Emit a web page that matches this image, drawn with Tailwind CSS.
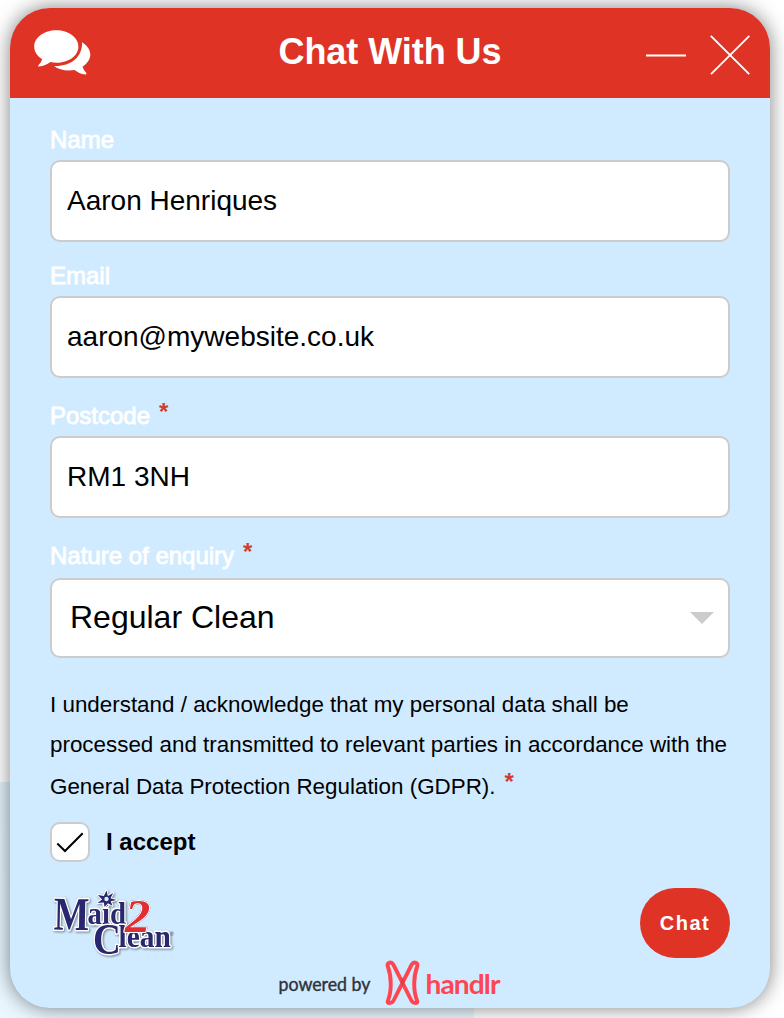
<!DOCTYPE html>
<html lang="en">
<head>
<meta charset="utf-8">
<title>Chat With Us</title>
<script src="https://cdn.jsdelivr.net/npm/@tailwindcss/browser@4"></script>
</head>
<body class="bg-white font-['Liberation_Sans',Arial,sans-serif] text-black">
<div class="relative isolate h-[1018px] w-[784px] overflow-hidden px-[10px] pt-2">
  <div class="absolute left-0 top-[782px] -z-10 h-[236px] w-[474px] bg-linear-to-b from-[#e2f2fa] to-[#eaf7ff]"></div>
  <main class="flex h-[1000px] w-[760px] flex-col overflow-hidden rounded-[40px] bg-[#d0ebff] shadow-[0_0_20px_rgba(0,0,0,0.5)]">
    <header class="flex h-[90px] shrink-0 items-start justify-between bg-[#df3326] text-white">
      <svg class="ml-6 mt-[20px] h-[50px] w-[60px]" viewBox="34 28 60 50" fill="currentColor" aria-hidden="true">
        <path d="M56.400 30.300c12.200 0 22 7.300 22 16.400s-9.800 16-22 16q-3.200 0-6-.6c-3.500 2.400-7 4-11.500 4.500-.9.100-1.100-.8-.4-1.400q3-2.700 3.700-6.100c-4.900-3-8-7.400-8-12.400 0-9.100 9.900-16.400 22.200-16.400z"/>
        <path d="M82 42.300c5 2.900 8.300 7.500 8.300 12.300 0 5-3.200 9.200-7.800 12.100q1.100 3.600 3.500 5.800c.8.900.4 2.300-.8 2.100-4.300-.7-7.700-2.300-10.600-4.600-8.100 1.300-16.100-.3-20.400-4 15.800.6 28.500-8.200 27.800-23.700z"/>
      </svg>
      <h1 class="ml-[40px] mt-6 w-[300px] text-center text-[36px] leading-[40px] font-bold tracking-[-0.05px]">Chat With Us</h1>
      <div class="mr-5 mt-[27px] flex gap-6">
        <svg class="h-[40px] w-[40px]" viewBox="0 0 40 40" aria-hidden="true"><path d="M0 20.500H40" stroke="white" stroke-width="2"/></svg>
        <svg class="h-[40px] w-[40px]" viewBox="0 0 40 40" aria-hidden="true"><path d="M.8 .8 39.200 39.200M39.400 .8 1 39.200" stroke="white" stroke-width="1.900"/></svg>
      </div>
    </header>

    <form class="flex flex-col px-10 pt-7">
      <label class="flex h-[34px] text-[24px] leading-[28px] text-white [-webkit-text-stroke:0.8px_white]">Name</label>
      <input class="h-[82px] w-full rounded-[10px] border-2 border-[#ccc] bg-white px-[15px] text-[28px] outline-none" value="Aaron Henriques">
      <label class="mt-5 flex h-[34px] text-[24px] leading-[28px] text-white [-webkit-text-stroke:0.8px_white]">Email</label>
      <input class="h-[82px] w-full rounded-[10px] border-2 border-[#ccc] bg-white px-[15px] text-[28px] outline-none" value="aaron@mywebsite.co.uk">
      <label class="mt-6 flex h-[34px] text-[24px] leading-[28px] text-white [-webkit-text-stroke:0.8px_white]">Postcode<span class="ml-[9px] -mt-[4px] text-[24px] font-bold text-[#d13d2d] [-webkit-text-stroke:0px]">*</span></label>
      <input class="h-[82px] w-full rounded-[10px] border-2 border-[#ccc] bg-white px-[15px] text-[28px] outline-none" value="RM1 3NH">
      <label class="mt-6 flex h-[36px] text-[24px] leading-[28px] text-white [-webkit-text-stroke:0.8px_white]">Nature of enquiry<span class="ml-[9px] -mt-[4px] text-[24px] font-bold text-[#d13d2d] [-webkit-text-stroke:0px]">*</span></label>
      <div class="flex h-[80px] items-center justify-between rounded-[10px] border-2 border-[#ccc] bg-white pl-[18px] pr-[14px] text-[32px]">
        <span class="pb-[2px]">Regular Clean</span>
        <svg class="h-3 w-6" viewBox="0 0 24 12" aria-hidden="true"><path d="M0 0H24L12 12Z" fill="#ccc"/></svg>
      </div>
      <div class="mt-[27px] h-[120px] whitespace-nowrap text-[22.4px] leading-[40px]">
        <p>I understand / acknowledge that my personal data shall be</p>
        <p>processed and transmitted to relevant parties in accordance with the</p>
        <p class="mt-[2px] flex">General Data Protection Regulation (GDPR).<span class="ml-[9px] -mt-[5px] text-[24px] font-bold text-[#d13d2d]">*</span></p>
      </div>
      <label class="mt-[17px] flex h-[40px] items-center gap-4 text-[24px] font-bold">
        <span class="flex size-10 items-center justify-center rounded-[10px] border-2 border-[#ccc] bg-white">
          <svg class="size-9 shrink-0" viewBox="52 824 36 36" fill="none" aria-hidden="true"><path d="M57.300 843.500 65 851 82.700 833.300" stroke="#000" stroke-width="2"/></svg>
        </span>
        <span>I accept</span>
      </label>
      <div class="mt-[22px] flex h-[76px] items-start justify-between">
        <svg class="h-[76px] w-[130px]" viewBox="50 884 130 76" role="img" aria-label="Maid2Clean">
          <g class="font-['Liberation_Serif',serif] font-bold drop-shadow-[1px_1px_1px_rgba(0,0,0,0.45)]" fill="#29276d" stroke="#fff" stroke-width="3" stroke-linejoin="round" paint-order="stroke">
            <text transform="translate(53.500 929.500) rotate(1) scale(.8 1)" font-size="47">M</text>
            <text transform="translate(87.500 924) scale(.9 1)" font-size="32">aid</text>
            <path stroke-width="2" d="m106.500 890.500 1.400 5.500 5.300-2.900-2.700 5.100 6 1.700-5.800 1.300 1.800 4.500-4.600-2.500-3.300 3.800-.8-4.500-6.300.5 4.600-3.600-4.300-4.400 6.100 1z"/>
            <text transform="translate(93 953.500) scale(.86 1)" font-size="45">C</text>
            <text transform="translate(118.500 947) scale(.92 1)" font-size="32">lean</text>
          </g>
          <circle cx="106.500" cy="899" r="2.200" fill="#d8ecfa"/>
          <g class="font-['Liberation_Serif',serif] font-bold italic drop-shadow-[0_0_0.7px_#29276d]">
            <text transform="translate(125 932) scale(1.100 1)" font-size="46" fill="#e12e32" stroke="#fff" stroke-width="2" stroke-linejoin="round" paint-order="stroke">2</text>
            <text transform="translate(125 932) scale(1.100 1)" font-size="46" fill="none" stroke="#e12e32" stroke-width=".7" aria-hidden="true"></text>
          </g>
          <text x="170" y="935.500" font-size="5" fill="#29276d">®</text>
        </svg>
        <button type="button" class="mt-[4px] h-[70px] w-[90px] rounded-[35px] bg-[#df3326] text-[20px] font-bold tracking-[1.5px] text-white">Chat</button>
      </div>
    </form>
    <footer class="flex justify-center">
      <svg class="h-[48px] w-[230px]" viewBox="275 960 230 48" role="img" aria-label="powered by handlr">
        <text class="font-['Lato',sans-serif]" x="278.500" y="990.500" font-size="19" fill="#30313a" stroke="#30313a" stroke-width=".4" textLength="92" lengthAdjust="spacingAndGlyphs">powered by</text>
        <path d="M393.300 964.500C391 961 386.300 962.800 388 967C391.700 977 391.700 991 388 1000.500C387.200 1002.600 388 1003 389.500 1003C392 1003 392.600 1002.500 393.600 1000.500L411.700 964.500C414 961 418.700 962.800 417 967C413.300 977 413.300 991 417 1000.500C417.800 1002.600 417 1003 415.500 1003C413 1003 412.400 1002.500 411.400 1000.500Z" fill="none" stroke="#ff4650" stroke-width="3.900" stroke-linejoin="round"/>
        <path d="m402.500 977.500 2 4.500-2 4.500-2-4.500z" fill="#d5414e"/>
        <text class="font-['Lato',sans-serif] font-bold" transform="translate(425.500 993.500) scale(1.040 1)" font-size="27" fill="#ff4650" textLength="72" lengthAdjust="spacing">handlr</text>
      </svg>
    </footer>
  </main>
</div>
</body>
</html>
